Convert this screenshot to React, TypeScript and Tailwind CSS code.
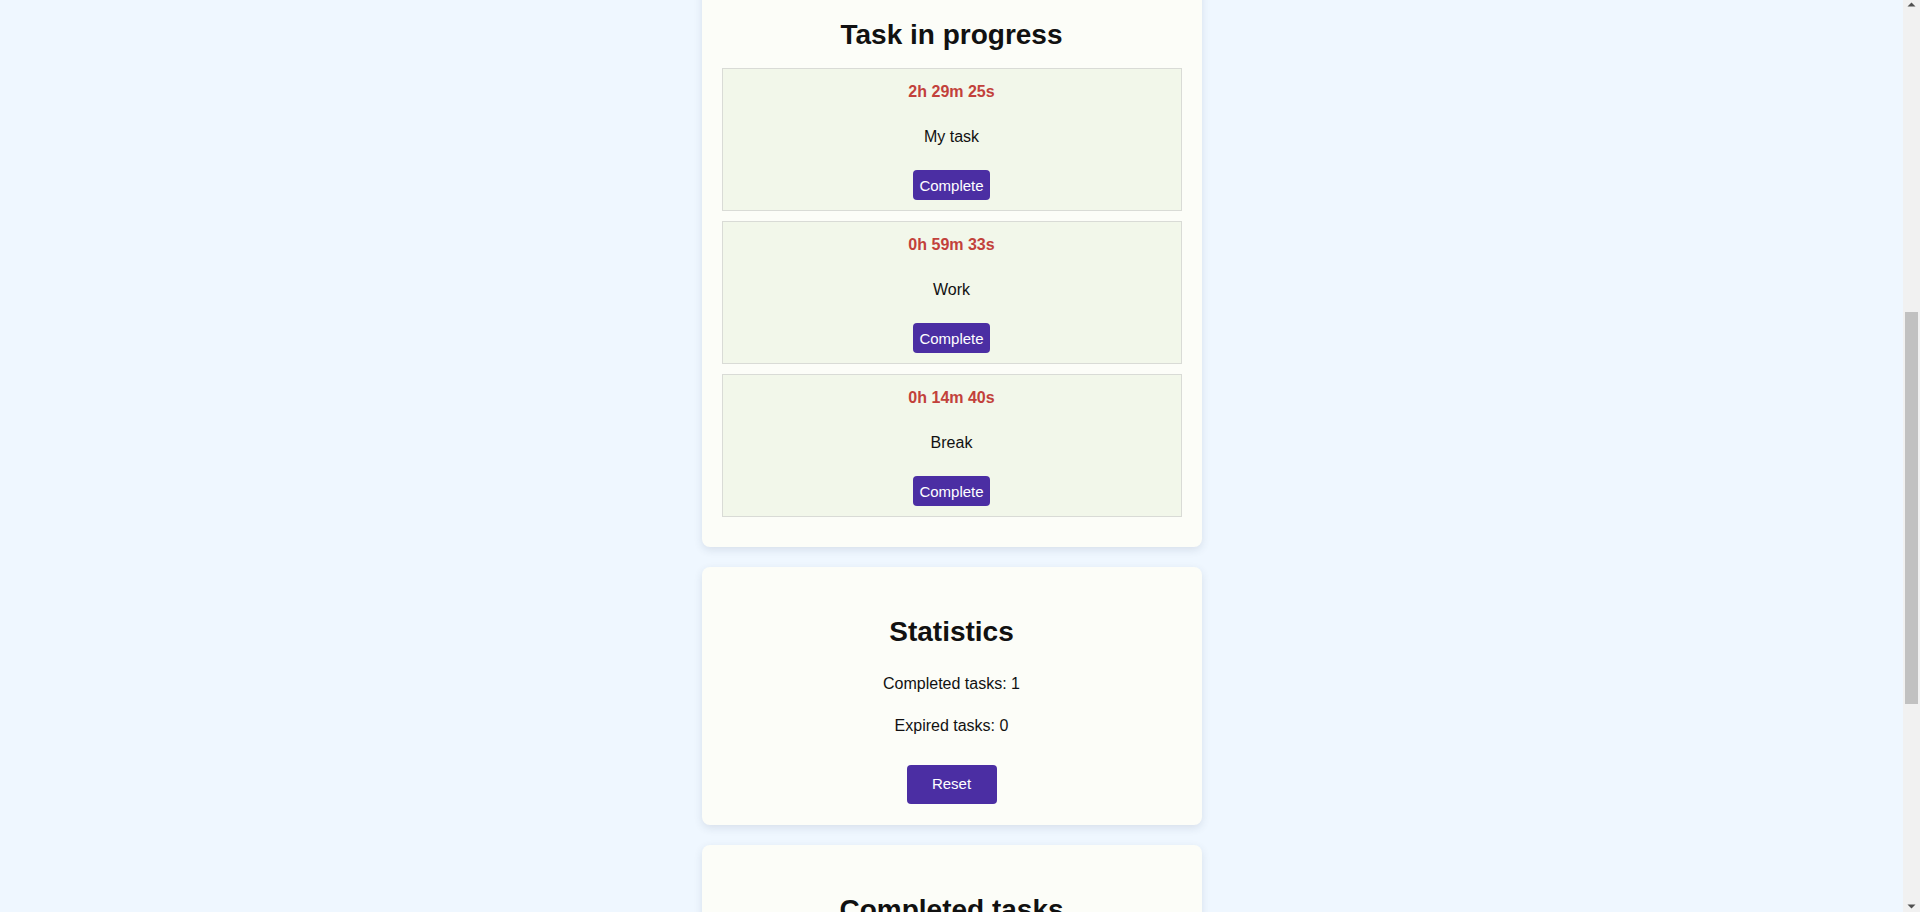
import React from 'react'

const font = { fontFamily: '"Liberation Sans", Arial, sans-serif' }

const tasks = [
  { id: 1, left: '2h 29m 25s', name: 'My task' },
  { id: 2, left: '0h 59m 33s', name: 'Work' },
  { id: 3, left: '0h 14m 40s', name: 'Break' },
]

function TaskItem({ left, name }: { left: string; name: string }) {
  return (
    <div className="flex flex-col items-center border border-[#d9dbd6] bg-[#f2f7ea] pt-[14px] pb-[10px]">
      <p className="text-[16px] leading-[18px] font-bold text-[#c2413b]">{left}</p>
      <p className="mt-[27px] text-[16px] leading-[18px] text-[#111]">{name}</p>
      <button className="mt-[24px] h-[30px] rounded-[4px] bg-[#4b2ea3] px-[6px] text-[15px] leading-[17px] text-white">
        Complete
      </button>
    </div>
  )
}

function Card({ children, className = '' }: { children: React.ReactNode; className?: string }) {
  return (
    <section className={`w-[500px] rounded-[8px] bg-[#fcfdf8] px-[20px] shadow-[0_3px_8px_rgba(40,60,90,0.12)] ${className}`}>
      {children}
    </section>
  )
}

function Scrollbar() {
  return (
    <div className="flex h-[912px] w-[17px] shrink-0 flex-col items-center bg-[#f1f1f1]">
      <svg width="17" height="17" viewBox="0 0 17 17" className="shrink-0">
        <path d="M4.5 6.5 L8.5 2.5 L12.5 6.5 Z" fill="#505050" />
      </svg>
      <div className="mt-[295px] h-[392px] w-[13px] bg-[#c1c1c1]" />
      <div className="flex-1" />
      <svg width="17" height="17" viewBox="0 0 17 17" className="shrink-0">
        <path d="M4.5 9.5 L8.5 13.5 L12.5 9.5 Z" fill="#505050" />
      </svg>
    </div>
  )
}

export default function App() {
  return (
    <div className="flex h-[912px] w-full overflow-hidden bg-[#eff7ff]" style={font}>
      <main className="flex flex-1 flex-col items-center overflow-hidden">
        <Card className="-mt-[20px] pb-[30px]">
          <h2 className="pt-[39px] text-center text-[28px] leading-[32px] font-bold text-[#111]">Task in progress</h2>
          <div className="mt-[17px] flex flex-col gap-[10px]">
            {tasks.map(t => <TaskItem key={t.id} left={t.left} name={t.name} />)}
          </div>
        </Card>

        <Card className="mt-[20px] flex flex-col items-center pb-[21px]">
          <h2 className="pt-[49px] text-center text-[28px] leading-[32px] font-bold text-[#111]">Statistics</h2>
          <p className="mt-[27px] text-[16px] leading-[18px] text-[#111]">Completed tasks: 1</p>
          <p className="mt-[24px] text-[16px] leading-[18px] text-[#111]">Expired tasks: 0</p>
          <button className="mt-[30px] h-[39px] w-[90px] rounded-[4px] bg-[#4b2ea3] text-[15px] text-white">Reset</button>
        </Card>

        <Card className="mt-[20px] shrink-0 pb-[40px]">
          <h2 className="pt-[49px] text-center text-[28px] leading-[32px] font-bold text-[#111]">Completed tasks</h2>
          <div className="h-[200px]" />
        </Card>
      </main>
      <Scrollbar />
    </div>
  )
}
